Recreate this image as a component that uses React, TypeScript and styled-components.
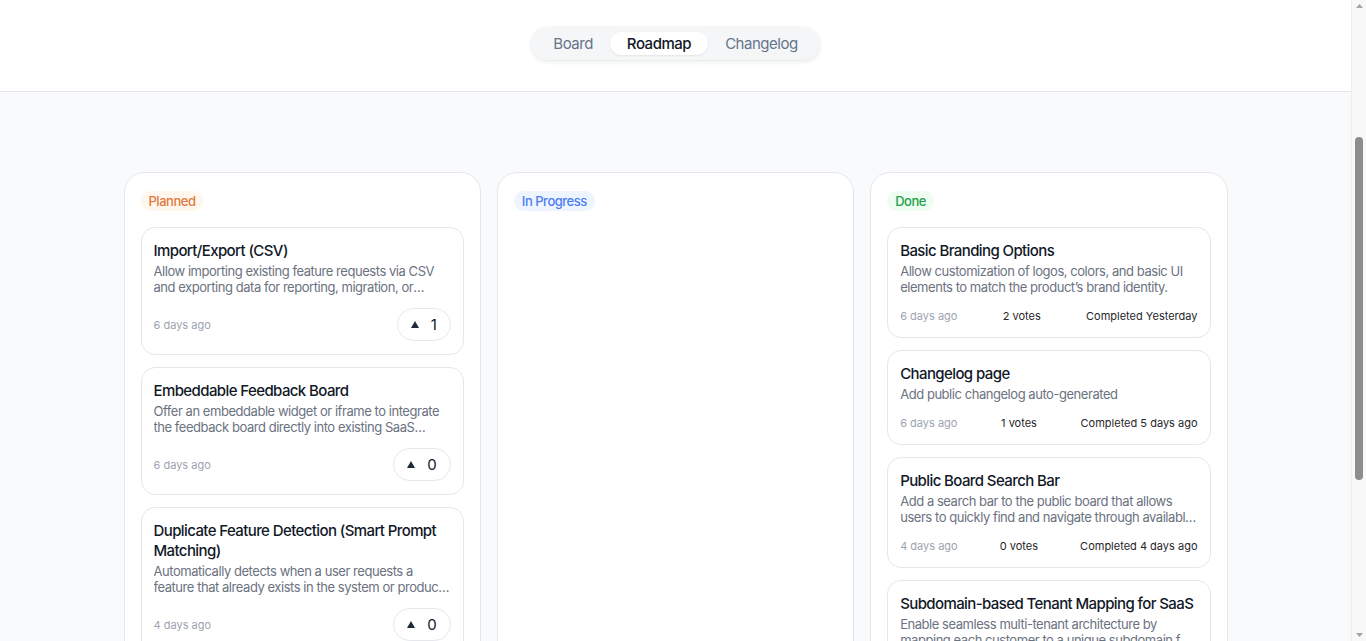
import React from "react";
import styled, { createGlobalStyle } from "styled-components";

const Global = createGlobalStyle`
  html, body { margin: 0; padding: 0; }
  body {
    background: #f9fafb;
    font-family: "Inter", "Noto Sans", sans-serif;
    color: #111827;
    letter-spacing: -0.03em;
    -webkit-font-smoothing: antialiased;
  }
  * { box-sizing: border-box; }
`;

const Page = styled.div`
  position: relative;
  padding-right: 15px;
  min-height: 100vh;
`;

const Header = styled.header`
  height: 92px;
  background: #ffffff;
  border-bottom: 1px solid #e5e7eb;
  display: flex;
  justify-content: center;
  align-items: flex-start;
  padding-top: 27px;
`;

const Tabs = styled.nav`
  display: flex;
  align-items: center;
  padding: 5px;
  background: #f5f6f7;
  border-radius: 999px;
  box-shadow: 0 2px 4px rgba(15, 23, 42, 0.08), 0 0 0 1px rgba(15, 23, 42, 0.02);
`;

const Tab = styled.button<{ $active?: boolean }>`
  border: none;
  font-family: inherit;
  letter-spacing: inherit;
  font-size: 15px;
  line-height: 22px;
  height: 23px;
  padding: 0 17px;
  border-radius: 999px;
  cursor: pointer;
  background: ${(p) => (p.$active ? "#ffffff" : "transparent")};
  color: ${(p) => (p.$active ? "#111827" : "#64748b")};
  font-weight: ${(p) => (p.$active ? 500 : 400)};
  box-shadow: ${(p) => (p.$active ? "0 1px 2px rgba(15,23,42,0.08)" : "none")};
`;

const Main = styled.main`
  max-width: 1152px;
  margin: 0 auto;
  padding: 80px 24px 90px;
`;

const Grid = styled.div`
  display: grid;
  grid-template-columns: repeat(3, 1fr);
  gap: 16px;
  align-items: stretch;
`;

const Column = styled.section`
  background: #ffffff;
  border: 1px solid #e5e7eb;
  border-radius: 20px;
  padding: 18px 16px 16px;
  display: flex;
  flex-direction: column;
  gap: 16px;
  min-height: 640px;
`;

const badgeColors = {
  planned: { bg: "#fff7ed", fg: "#e07a3f" },
  progress: { bg: "#eef5ff", fg: "#4b7cf3" },
  done: { bg: "#eefcf2", fg: "#22a34a" },
};

type BadgeKind = keyof typeof badgeColors;

const Badge = styled.span<{ $kind: BadgeKind }>`
  align-self: flex-start;
  font-size: 13px;
  line-height: 20px;
  padding: 0 8px;
  border-radius: 999px;
  background: ${(p) => badgeColors[p.$kind].bg};
  color: ${(p) => badgeColors[p.$kind].fg};
  font-weight: 500;
`;

const CardList = styled.div`
  display: flex;
  flex-direction: column;
  gap: 12px;
`;

const Card = styled.article`
  background: #ffffff;
  border: 1px solid #e5e7eb;
  border-radius: 14px;
  padding: 12px 12px 13px;
  display: flex;
  flex-direction: column;
`;

const Title = styled.h3`
  margin: 0;
  font-size: 15px;
  line-height: 20px;
  font-weight: 500;
  letter-spacing: -0.04em;
  color: #111827;
  padding-top: 1px;
`;

const Desc = styled.p`
  margin: 2px 0 0;
  font-size: 13px;
  line-height: 16px;
  letter-spacing: -0.035em;
  color: #6b7280;
  display: -webkit-box;
  -webkit-line-clamp: 2;
  -webkit-box-orient: vertical;
  overflow: hidden;
`;

const Footer = styled.div`
  display: flex;
  align-items: center;
  justify-content: space-between;
  margin-top: 13px;
  font-size: 11px;
  line-height: 16px;
  letter-spacing: 0;
`;

const Muted = styled.span`
  color: #9ca3af;
`;

const Meta = styled.span`
  color: #27272a;
  font-weight: 400;
`;

const VoteButton = styled.button`
  display: flex;
  align-items: center;
  gap: 12px;
  height: 33px;
  padding: 0 13px;
  min-width: 54px;
  border: 1px solid #e5e7eb;
  border-radius: 999px;
  background: #ffffff;
  font-family: inherit;
  font-size: 15px;
  color: #111827;
  cursor: pointer;
`;

const ScrollTrack = styled.div`
  position: absolute;
  top: 0;
  right: 0;
  width: 15px;
  height: 641px;
  background: #f8f8f8;
  border-left: 1px solid #ededed;
  display: flex;
  flex-direction: column;
  align-items: center;
  justify-content: space-between;
  padding: 4px 0;
`;

const ScrollThumb = styled.div`
  position: absolute;
  top: 137px;
  left: 3px;
  width: 8px;
  height: 343px;
  border-radius: 4px;
  background: #8d8d8d;
`;

const Arrow = () => (
  <svg width="8" height="7" viewBox="0 0 8 7" aria-hidden>
    <path d="M4 0 L8 7 L0 7 Z" fill="#1f2937" />
  </svg>
);

const ScrollArrow = ({ down }: { down?: boolean }) => (
  <svg width="7" height="4" viewBox="0 0 7 4" aria-hidden>
    <path d={down ? "M0 0 L7 0 L3.5 4 Z" : "M3.5 0 L7 4 L0 4 Z"} fill="#a3a3a3" />
  </svg>
);

type Item = { title: string; desc: string; ago: string; votes: number; completed?: string };

const planned: Item[] = [
  {
    title: "Import/Export (CSV)",
    desc: "Allow importing existing feature requests via CSV and exporting data for reporting, migration, or backup purposes.",
    ago: "6 days ago",
    votes: 1,
  },
  {
    title: "Embeddable Feedback Board",
    desc: "Offer an embeddable widget or iframe to integrate the feedback board directly into existing SaaS products.",
    ago: "6 days ago",
    votes: 0,
  },
  {
    title: "Duplicate Feature Detection (Smart Prompt Matching)",
    desc: "Automatically detects when a user requests a feature that already exists in the system or product. It suggests similar requests instead.",
    ago: "4 days ago",
    votes: 0,
  },
];

const done: Item[] = [
  {
    title: "Basic Branding Options",
    desc: "Allow customization of logos, colors, and basic UI elements to match the product’s brand identity.",
    ago: "6 days ago",
    votes: 2,
    completed: "Completed Yesterday",
  },
  {
    title: "Changelog page",
    desc: "Add public changelog auto-generated",
    ago: "6 days ago",
    votes: 1,
    completed: "Completed 5 days ago",
  },
  {
    title: "Public Board Search Bar",
    desc: "Add a search bar to the public board that allows users to quickly find and navigate through available feature requests.",
    ago: "4 days ago",
    votes: 0,
    completed: "Completed 4 days ago",
  },
  {
    title: "Subdomain-based Tenant Mapping for SaaS",
    desc: "Enable seamless multi-tenant architecture by mapping each customer to a unique subdomain for their public board.",
    ago: "4 days ago",
    votes: 0,
    completed: "Completed 4 days ago",
  },
];

const PlannedCard = ({ item }: { item: Item }) => (
  <Card>
    <Title>{item.title}</Title>
    <Desc>{item.desc}</Desc>
    <Footer>
      <Muted>{item.ago}</Muted>
      <VoteButton>
        <Arrow />
        <span>{item.votes}</span>
      </VoteButton>
    </Footer>
  </Card>
);

const DoneCard = ({ item }: { item: Item }) => (
  <Card>
    <Title>{item.title}</Title>
    <Desc>{item.desc}</Desc>
    <Footer>
      <Muted>{item.ago}</Muted>
      <Meta>{item.votes} votes</Meta>
      <Meta>{item.completed}</Meta>
    </Footer>
  </Card>
);

export default function App() {
  return (
    <Page>
      <Global />
      <Header>
        <Tabs>
          <Tab>Board</Tab>
          <Tab $active>Roadmap</Tab>
          <Tab>Changelog</Tab>
        </Tabs>
      </Header>
      <Main>
        <Grid>
          <Column>
            <Badge $kind="planned">Planned</Badge>
            <CardList>
              {planned.map((it) => (
                <PlannedCard key={it.title} item={it} />
              ))}
            </CardList>
          </Column>
          <Column>
            <Badge $kind="progress">In Progress</Badge>
          </Column>
          <Column>
            <Badge $kind="done">Done</Badge>
            <CardList>
              {done.map((it) => (
                <DoneCard key={it.title} item={it} />
              ))}
            </CardList>
          </Column>
        </Grid>
      </Main>
      <ScrollTrack aria-hidden>
        <ScrollArrow />
        <ScrollThumb />
        <ScrollArrow down />
      </ScrollTrack>
    </Page>
  );
}
